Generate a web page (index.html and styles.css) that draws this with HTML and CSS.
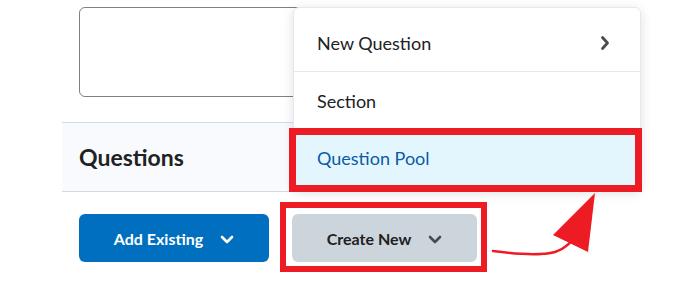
FILE: index.html
```html
<!DOCTYPE html>
<html>
<head>
<meta charset="utf-8">
<link rel="stylesheet" href="styles.css">
</head>
<body>
<div class="page">
  <div class="field"><div class="textarea"></div></div>
  <div class="band"><h2 class="heading">Questions</h2></div>
  <div class="actions">
    <button class="btn btn-primary">Add Existing
      <svg class="chev" width="14" height="9" viewBox="0 0 14 9"><path d="M2 2 L7 7 L12 2" fill="none" stroke="currentColor" stroke-width="2.6" stroke-linecap="round" stroke-linejoin="round"/></svg>
    </button>
    <button class="btn btn-secondary">Create New
      <svg class="chev" width="14" height="9" viewBox="0 0 14 9"><path d="M2 2 L7 7 L12 2" fill="none" stroke="currentColor" stroke-width="2.6" stroke-linecap="round" stroke-linejoin="round"/></svg>
    </button>
  </div>

  <div class="menu">
    <div class="menu-item sep">New Question
      <svg class="chev-right" width="10" height="16" viewBox="0 0 10 16"><path d="M2.5 2.5 L7.5 8 L2.5 13.5" fill="none" stroke="currentColor" stroke-width="2.8" stroke-linecap="round" stroke-linejoin="round"/></svg>
    </div>
    <div class="menu-item">Section</div>
    <div class="menu-item active">Question Pool</div>
  </div>

  <div class="mark mark-pool"></div>
  <div class="mark mark-create"></div>
  <svg class="arrow" width="120" height="80" viewBox="480 180 120 80">
    <path d="M493 251 C515 254, 540 256, 555 252 C567 248, 574 240, 579 229" fill="none" stroke="#ed1c24" stroke-width="2.5" stroke-linecap="round"/>
    <polygon points="595,193 553,235 588,252" fill="#ed1c24"/>
  </svg>
</div>
</body>
</html>
```

FILE: styles.css
```css
* { box-sizing: border-box; }
html, body { margin: 0; padding: 0; background: #fff; }
body { font-family: Lato, "Noto Sans", sans-serif; color: #202122; width: 676px; height: 289px; overflow: hidden; }
.page { position: relative; width: 676px; height: 289px; padding-left: 62px; }
.field { padding: 7px 0 0 17px; height: 122px; }
.textarea { width: 560px; height: 90px; border: 1px solid #7c8185; border-radius: 6px; background: #fff; }
.band { width: 578px; height: 70px; background: #f9fafd; border-top: 1px solid #d3d9e3; border-bottom: 1px solid #d3d9e3; padding-left: 17px; display: flex; align-items: center; }
.heading { margin: 0; font-size: 23px; font-weight: 700; color: #202122; }
.actions { display: flex; gap: 23px; padding: 22px 0 0 17px; }
.btn { height: 48px; border: none; border-radius: 6px; font-family: Lato, "Noto Sans", sans-serif; font-size: 16px; font-weight: 700; display: flex; align-items: center; justify-content: center; gap: 17px; padding: 0; }
.btn-primary { width: 190px; background: #006fbf; color: #fff; }
.btn-secondary { width: 185px; background: #cdd5dc; color: #202122; }
.btn-secondary .chev { color: #494c4e; }
.chev { margin-top: 3px; }
.menu { position: absolute; left: 293px; top: 7px; width: 348px; height: 184px; background: #fff; border: 1px solid #e3e9f1; border-radius: 6px; box-shadow: 0 2px 12px rgba(0,0,0,0.12); padding-top: 6px; }
.menu-item { height: 57px; padding: 0 30px 0 23px; display: flex; align-items: center; justify-content: space-between; font-size: 18px; color: #202122; }
.menu-item.sep { border-bottom: 1px solid #e3e9f1; height: 58px; }
.menu-item.active { background: #e3f6fe; color: #0b5aa8; }
.chev-right { color: #494c4e; }
.mark { position: absolute; border: 7px solid #ed1c24; }
.mark-pool { left: 289px; top: 128px; width: 353px; height: 64px; }
.mark-create { left: 280px; top: 202px; width: 207px; height: 70px; border-width: 6px; }
.arrow { position: absolute; left: 480px; top: 180px; }
```
